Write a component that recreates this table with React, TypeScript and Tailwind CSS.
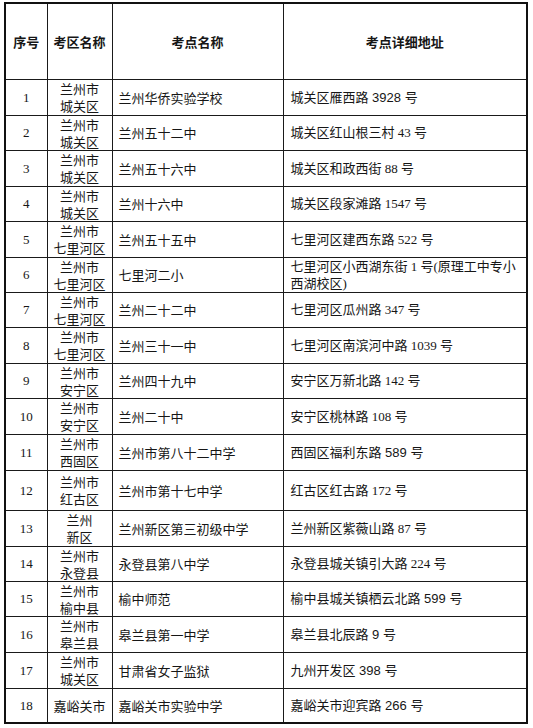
type Row = {
  no: string;
  area: string[];
  name: string;
  addr: string[];
  h: string;
  sans?: boolean;
};

const rows: Row[] = [
  { no: "1", area: ["兰州市", "城关区"], name: "兰州华侨实验学校", addr: ["城关区雁西路 3928 号"], h: "h-[36px]", sans: true },
  { no: "2", area: ["兰州市", "城关区"], name: "兰州五十二中", addr: ["城关区红山根三村 43 号"], h: "h-[35px]" },
  { no: "3", area: ["兰州市", "城关区"], name: "兰州五十六中", addr: ["城关区和政西街 88 号"], h: "h-[36px]" },
  { no: "4", area: ["兰州市", "城关区"], name: "兰州十六中", addr: ["城关区段家滩路 1547 号"], h: "h-[35px]" },
  { no: "5", area: ["兰州市", "七里河区"], name: "兰州五十五中", addr: ["七里河区建西东路 522 号"], h: "h-[36px]" },
  { no: "6", area: ["兰州市", "七里河区"], name: "七里河二小", addr: ["七里河区小西湖东街 1 号(原理工中专小", "西湖校区)"], h: "h-[35px]" },
  { no: "7", area: ["兰州市", "七里河区"], name: "兰州二十二中", addr: ["七里河区瓜州路 347 号"], h: "h-[35px]" },
  { no: "8", area: ["兰州市", "七里河区"], name: "兰州三十一中", addr: ["七里河区南滨河中路 1039 号"], h: "h-[36px]" },
  { no: "9", area: ["兰州市", "安宁区"], name: "兰州四十九中", addr: ["安宁区万新北路 142 号"], h: "h-[35px]" },
  { no: "10", area: ["兰州市", "安宁区"], name: "兰州二十中", addr: ["安宁区桃林路 108 号"], h: "h-[36px]" },
  { no: "11", area: ["兰州市", "西固区"], name: "兰州市第八十二中学", addr: ["西固区福利东路 589 号"], h: "h-[36px]", sans: true },
  { no: "12", area: ["兰州市", "红古区"], name: "兰州市第十七中学", addr: ["红古区红古路 172 号"], h: "h-[40px]" },
  { no: "13", area: ["兰州", "新区"], name: "兰州新区第三初级中学", addr: ["兰州新区紫薇山路 87 号"], h: "h-[36px]" },
  { no: "14", area: ["兰州市", "永登县"], name: "永登县第八中学", addr: ["永登县城关镇引大路 224 号"], h: "h-[35px]" },
  { no: "15", area: ["兰州市", "榆中县"], name: "榆中师范", addr: ["榆中县城关镇栖云北路 599 号"], h: "h-[35px]", sans: true },
  { no: "16", area: ["兰州市", "皋兰县"], name: "皋兰县第一中学", addr: ["皋兰县北辰路 9 号"], h: "h-[36px]", sans: true },
  { no: "17", area: ["兰州市", "城关区"], name: "甘肃省女子监狱", addr: ["九州开发区 398 号"], h: "h-[36px]", sans: true },
  { no: "18", area: ["嘉峪关市"], name: "嘉峪关市实验中学", addr: ["嘉峪关市迎宾路 266 号"], h: "h-[35px]", sans: true },
];

const serif = "font-['Liberation_Serif','Noto_Sans_CJK_SC',serif]";
const cjkOnly = "font-['Noto_Sans_CJK_SC',sans-serif]";
const cjkSans = "font-['Liberation_Sans','Noto_Sans_CJK_SC',sans-serif]";
const cell = "border border-[#1a1a1a] p-0 align-middle overflow-hidden";

export default function App() {
  return (
    <div className="min-h-[728px] w-[533px] bg-white pl-[4px] pt-[2px] text-[#161616]">
      <table className={`w-[524px] table-fixed border-collapse border-2 border-[#111] text-[13px] leading-[17px] ${serif}`}>
        <colgroup>
          <col className="w-[42px]" />
          <col className="w-[65px]" />
          <col className="w-[171px]" />
          <col />
        </colgroup>
        <thead>
          <tr className={`h-[76px] font-bold ${cjkOnly}`}>
            <th className={`${cell} text-center`}>序号</th>
            <th className={`${cell} text-center`}>考区名称</th>
            <th className={`${cell} text-center`}>考点名称</th>
            <th className={`${cell} text-center`}>考点详细地址</th>
          </tr>
        </thead>
        <tbody>
          {rows.map((r) => (
            <tr key={r.no} className={r.h}>
              <td className={`${cell} text-center`}>{r.no}</td>
              <td className={`${cell} text-center ${cjkOnly}`}>
                {r.area.map((a) => (
                  <div key={a} className="h-[17px]">{a}</div>
                ))}
              </td>
              <td className={`${cell} pl-[6px] ${cjkOnly}`}>{r.name}</td>
              <td className={`${cell} pl-[7px] ${r.sans ? cjkSans : ""}`}>
                {r.addr.map((a) => (
                  <div key={a} className="h-[17px] whitespace-nowrap">{a}</div>
                ))}
              </td>
            </tr>
          ))}
        </tbody>
      </table>
    </div>
  );
}
